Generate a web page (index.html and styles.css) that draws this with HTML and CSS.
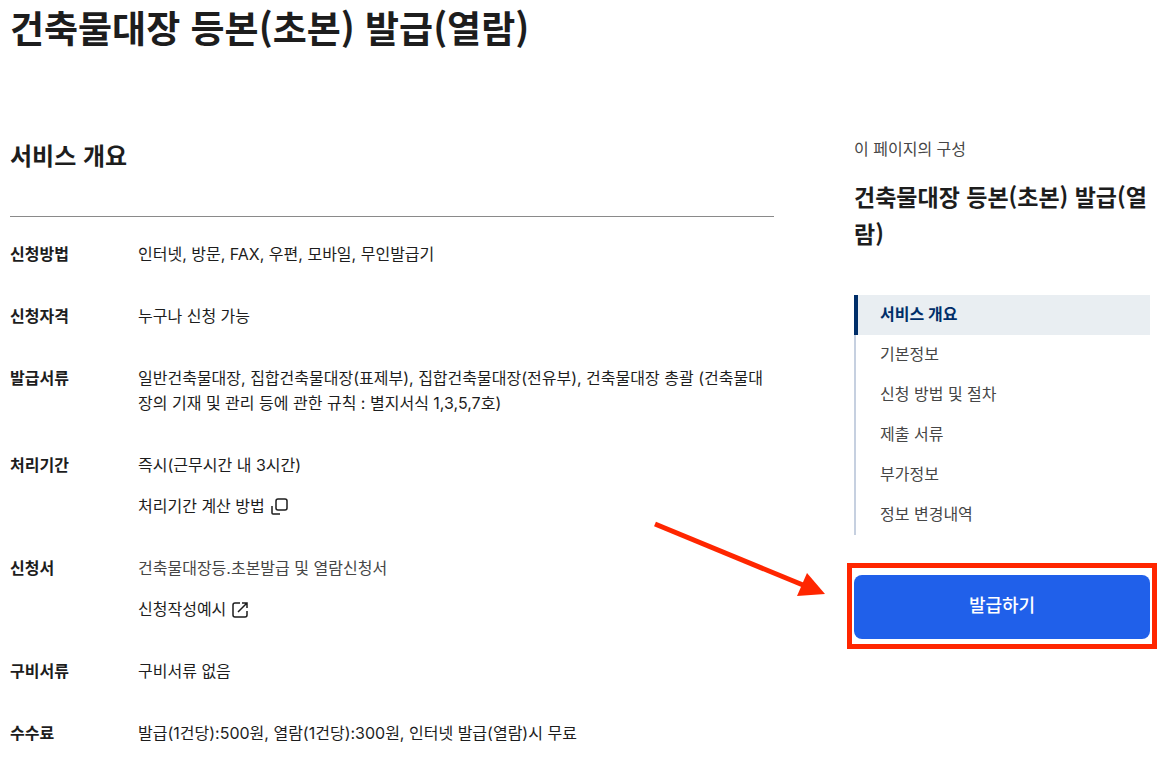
FILE: index.html
```html
<!DOCTYPE html>
<html lang="ko">
<head>
    <meta charset="UTF-8">
    <meta name="viewport" content="width=device-width, initial-scale=1.0">
    <title>건축물대장 등본(초본) 발급(열람)</title>
    <link rel="stylesheet" href="styles.css">
</head>
<body>
    <h1 class="page-title">건축물대장 등본(초본) 발급(열람)</h1>

    <div class="layout">
        <main class="content">
            <h2 class="section-title">서비스 개요</h2>

            <dl class="info-list">
                <div class="info-row">
                    <dt>신청방법</dt>
                    <dd>인터넷, 방문, FAX, 우편, 모바일, 무인발급기</dd>
                </div>
                <div class="info-row">
                    <dt>신청자격</dt>
                    <dd>누구나 신청 가능</dd>
                </div>
                <div class="info-row">
                    <dt>발급서류</dt>
                    <dd>일반건축물대장, 집합건축물대장(표제부), 집합건축물대장(전유부), 건축물대장 총괄 (건축물대장의 기재 및 관리 등에 관한 규칙 : 별지서식 1,3,5,7호)</dd>
                </div>
                <div class="info-row">
                    <dt>처리기간</dt>
                    <dd>
                        <p>즉시(근무시간 내 3시간)</p>
                        <button type="button" class="text-link">처리기간 계산 방법
                            <svg class="icon" viewBox="0 0 18 18" aria-hidden="true">
                                <rect x="5" y="1" width="11" height="11" rx="2"/>
                                <path d="M1 8v7a1 1 0 0 0 1 1h7"/>
                            </svg>
                        </button>
                    </dd>
                </div>
                <div class="info-row">
                    <dt>신청서</dt>
                    <dd>
                        <p class="muted">건축물대장등.초본발급 및 열람신청서</p>
                        <a href="#" class="text-link">신청작성예시
                            <svg class="icon" viewBox="0 0 18 18" aria-hidden="true">
                                <path d="M8 2H3a2 2 0 0 0-2 2v10a2 2 0 0 0 2 2h10a2 2 0 0 0 2-2v-4M10 2h5v5M15 2L6 11"/>
                            </svg>
                        </a>
                    </dd>
                </div>
                <div class="info-row">
                    <dt>구비서류</dt>
                    <dd>구비서류 없음</dd>
                </div>
                <div class="info-row">
                    <dt>수수료</dt>
                    <dd>발급(1건당):500원, 열람(1건당):300원, 인터넷 발급(열람)시 무료</dd>
                </div>
            </dl>
        </main>

        <aside class="sidebar">
            <p class="side-caption">이 페이지의 구성</p>
            <h2 class="side-title">건축물대장 등본(초본) 발급(열람)</h2>
            <nav class="side-nav">
                <a href="#" class="active">서비스 개요</a>
                <a href="#">기본정보</a>
                <a href="#">신청 방법 및 절차</a>
                <a href="#">제출 서류</a>
                <a href="#">부가정보</a>
                <a href="#">정보 변경내역</a>
            </nav>
            <div class="highlight">
                <button type="button" class="issue-button">발급하기</button>
                <svg class="arrow" viewBox="0 0 172 80" aria-hidden="true">
                    <path class="arrow-line" d="M2 4L150 65"/>
                    <path class="arrow-head" d="M154 53L172 74L144 76z"/>
                </svg>
            </div>
        </aside>
    </div>
</body>
</html>
```
FILE: styles.css
```css
* {
    box-sizing: border-box;
}
body {
    margin: 0;
    padding: 0 16px 20px 10px;
    font-family: Inter, "Noto Sans CJK KR", sans-serif;
    font-size: 16px;
    line-height: 25px;
    color: #1d1d1d;
    background-color: #fff;
    word-break: break-all;
}
h1, h2, p, dl, dd {
    margin: 0;
}
h1, h2 {
    font-family: "Noto Sans CJK KR", sans-serif;
}
.page-title {
    font-size: 37px;
    line-height: 54px;
}
.layout {
    display: flex;
    align-items: flex-start;
    gap: 80px;
    padding-top: 82px;
}
.content {
    flex: 1;
}
.section-title {
    padding-bottom: 42px;
    border-bottom: 1px solid #8a8a8a;
    font-size: 24px;
    line-height: 38px;
}
.info-list {
    display: flex;
    flex-direction: column;
    gap: 37px;
    padding-top: 25px;
}
.info-row {
    display: flex;
}
.info-row dt {
    width: 128px;
    flex-shrink: 0;
    font-weight: bold;
}
.info-row dd {
    flex: 1;
}
.muted {
    color: #464646;
}
.text-link {
    display: flex;
    align-items: center;
    gap: 6px;
    margin-top: 16px;
    padding: 0;
    border: none;
    background: none;
    font: inherit;
    color: inherit;
    text-decoration: none;
    cursor: pointer;
}
.icon {
    width: 18px;
    height: 18px;
    fill: none;
    stroke: #1d1d1d;
    stroke-width: 1.5;
}
.sidebar {
    width: 296px;
    padding-top: 1px;
}
.side-caption {
    color: #464646;
}
.side-title {
    margin-top: 16px;
    font-size: 23px;
    line-height: 37px;
}
.side-nav {
    margin-top: 43px;
    border-left: 2px solid #c6d0e0;
}
.side-nav a {
    display: block;
    padding: 0 0 2px 24px;
    line-height: 38px;
    color: #464646;
    text-decoration: none;
}
.side-nav .active {
    margin-left: -2px;
    padding-left: 22px;
    border-left: 4px solid #002e69;
    background-color: #e9eef2;
    font-weight: bold;
    color: #002e69;
}
.highlight {
    position: relative;
    margin: 28px -7px 0;
    padding: 7px 2px 5px;
    border: 5px solid #ff2600;
}
.issue-button {
    display: block;
    width: 100%;
    height: 64px;
    padding-bottom: 4px;
    border: none;
    border-radius: 8px;
    background-color: #2060ea;
    font: inherit;
    font-size: 18px;
    font-weight: 500;
    color: #fff;
    cursor: pointer;
}
.arrow {
    position: absolute;
    top: -48px;
    right: 327px;
    width: 172px;
    height: 80px;
}
.arrow-line {
    stroke: #ff2600;
    stroke-width: 5;
}
.arrow-head {
    fill: #ff2600;
}
```
